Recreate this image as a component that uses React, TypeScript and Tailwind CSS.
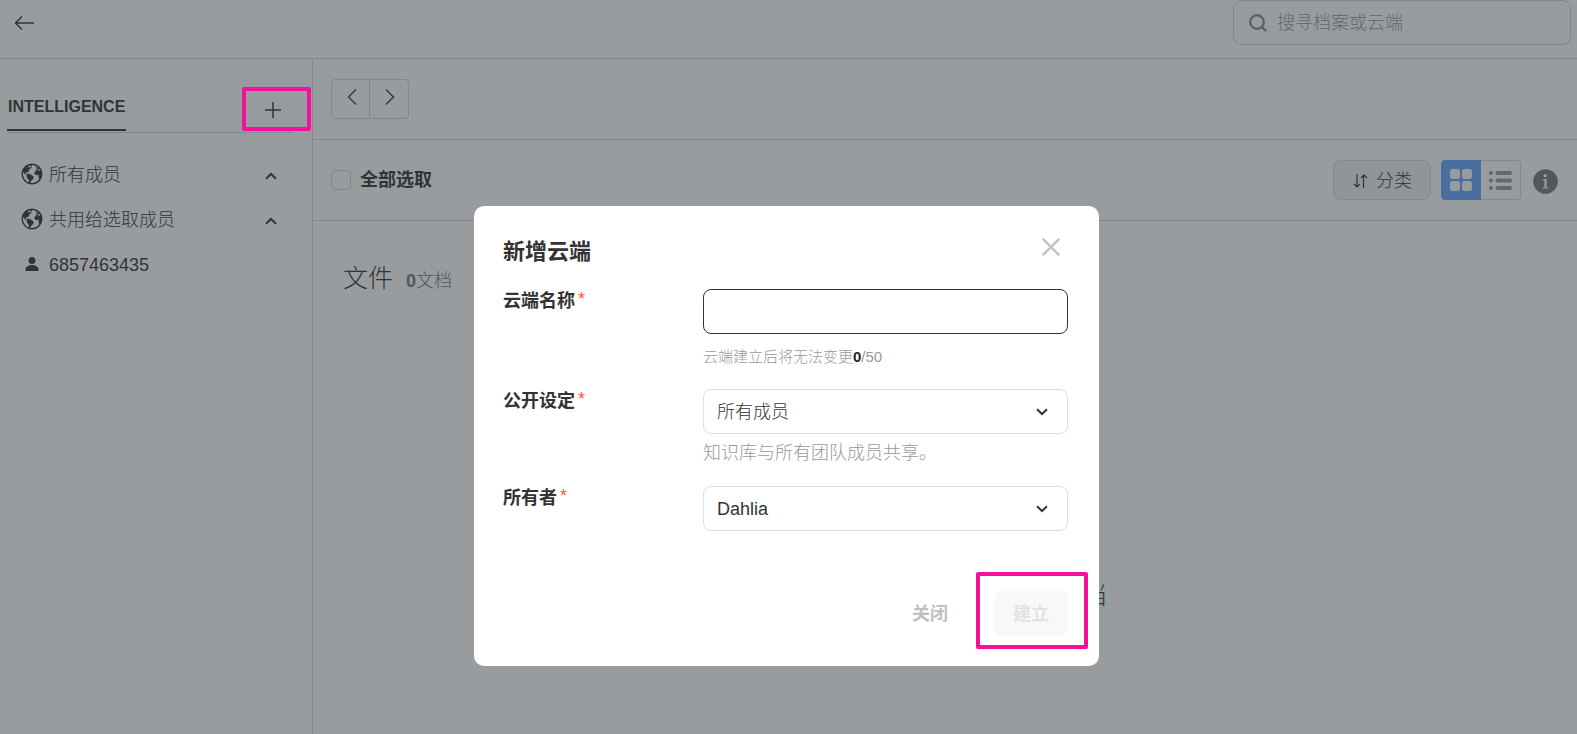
import { IoEarth, IoPersonSharp } from "react-icons/io5";

function Field({ id, label, children }: { id: string; label: string; children: React.ReactNode }) {
  return (
    <div className="flex">
      <label htmlFor={id} className="flex w-[200px] shrink-0 items-start text-lg leading-6 font-bold">
        {label}
        <span className="ml-[3px] leading-5 font-normal text-[#ff5c45]">*</span>
      </label>
      <div className="min-w-0 flex-1">{children}</div>
    </div>
  );
}

function Select({ id, options }: { id: string; options: string[] }) {
  return (
    <div className="relative">
      <select
        id={id}
        className="block h-[45px] w-full appearance-none rounded-lg border border-[#dddde5] bg-white px-[13px] text-lg font-light"
      >
        {options.map((option) => (
          <option key={option}>{option}</option>
        ))}
      </select>
      <svg className="pointer-events-none absolute top-[19px] right-5 h-2 w-3" viewBox="0 0 12 8" fill="none" stroke="#333" strokeWidth="2">
        <path d="M1 1.2 6 6l5-4.8" />
      </svg>
    </div>
  );
}

function SidebarItem({ icon, text, open }: { icon: React.ReactNode; text: string; open?: boolean }) {
  return (
    <li>
      <button type="button" className="flex h-[45px] w-full items-center pr-[35px] pl-5 text-left text-lg font-light">
        <span className="mr-[5px] flex w-6 justify-center">{icon}</span>
        <span className="flex-1">{text}</span>
        {open && (
          <svg className="mt-[3px] h-2 w-3" viewBox="0 0 12 8" fill="none" stroke="currentColor" strokeWidth="2">
            <path d="M1 6.8 6 2l5 4.8" />
          </svg>
        )}
      </button>
    </li>
  );
}

export default function App() {
  return (
    <div className="relative flex min-h-screen flex-col overflow-hidden bg-white font-['Liberation_Sans','Noto_Sans_CJK_SC',sans-serif] text-[#333]">
      <header className="flex h-[59px] items-start justify-between border-b border-[#d5d6df] pr-1.5 pl-[14px]">
        <button type="button" aria-label="返回" className="pt-4">
          <svg className="h-[15px] w-5" viewBox="0 0 20 15" fill="none" stroke="currentColor" strokeWidth="1.5">
            <path d="M20 7H2M8 .5 1.5 7 8 13.5" />
          </svg>
        </button>
        <div className="flex h-[45px] w-[338px] items-center rounded-lg border border-[#d5d6df] px-[15px]">
          <svg className="mr-[10px] h-[18px] w-[18px] shrink-0" viewBox="0 0 18 18" fill="none" stroke="#888" strokeWidth="2.2">
            <circle cx="8" cy="8" r="6.8" />
            <path d="m12.8 12.8 4.5 4.5" />
          </svg>
          <input
            type="search"
            aria-label="搜寻档案或云端"
            placeholder="搜寻档案或云端"
            className="min-w-0 flex-1 bg-transparent text-lg font-light placeholder:text-[#999]"
          />
        </div>
      </header>

      <div className="flex flex-1">
        <aside className="w-[313px] shrink-0 border-r border-[#d5d6df]">
          <div className="mr-[19px] ml-[7px] flex h-[74px] items-end justify-between border-b border-[#d5d6df]">
            <button type="button" className="mb-px h-9 border-b-2 border-[#333] px-px pb-2.5 text-base leading-6 font-bold">
              INTELLIGENCE
            </button>
            <button type="button" aria-label="新增" className="mr-3 mb-[14px]">
              <svg className="h-4 w-4" viewBox="0 0 16 16" stroke="currentColor" strokeWidth="1.5">
                <path d="M8 0v16M0 8h16" />
              </svg>
            </button>
          </div>
          <ul className="pt-[19px]">
            <SidebarItem icon={<IoEarth className="mb-0.5 h-6 w-6" />} text="所有成员" open />
            <SidebarItem icon={<IoEarth className="mb-0.5 h-6 w-6" />} text="共用给选取成员" open />
            <SidebarItem icon={<IoPersonSharp className="mb-0.5 h-4 w-4" />} text="6857463435" />
          </ul>
        </aside>

        <main className="min-w-0 flex-1">
          <div className="flex h-[81px] items-center border-b border-[#d5d6df] pl-[18px]">
            <div className="flex h-10 rounded-sm border border-[#d5d6df]">
              <button type="button" aria-label="上一页" className="w-[38px] border-r border-[#d5d6df] pb-1 pl-[15px]">
                <svg className="h-4 w-[10px]" viewBox="0 0 10 16" fill="none" stroke="currentColor" strokeWidth="1.3">
                  <path d="M9 .5 1.5 8 9 15.5" />
                </svg>
              </button>
              <button type="button" aria-label="下一页" className="w-[38px] pb-1 pl-[15px]">
                <svg className="h-4 w-[10px]" viewBox="0 0 10 16" fill="none" stroke="currentColor" strokeWidth="1.3">
                  <path d="M1 .5 8.5 8 1 15.5" />
                </svg>
              </button>
            </div>
          </div>

          <div className="flex h-[81px] items-center border-b border-[#d5d6df] pr-[19px] pl-[18px]">
            <label className="flex items-center gap-[9px] text-lg font-bold">
              <input type="checkbox" className="h-5 w-5 appearance-none rounded-sm border border-[#d5d6df]" />
              全部选取
            </label>
            <button type="button" className="ml-auto flex h-10 items-center gap-2 rounded-lg border border-[#d5d6df] bg-[#f0f2f7] px-[18px] pt-0.5 text-lg font-light">
              <svg className="h-4 w-4" viewBox="0 0 16 16" fill="none" stroke="currentColor" strokeWidth="1.2">
                <path d="M5 1v13M2 11l3 3 3-3M11.5 15V2M9 5l3-3 3 3" />
              </svg>
              分类
            </button>
            <div className="ml-[10px] flex h-10">
              <button type="button" aria-label="网格" className="flex w-10 items-center justify-center rounded-l-sm bg-[#65a6ff]">
                <svg className="h-[22px] w-[22px]" viewBox="0 0 22 22" fill="#fff">
                  <rect width="10" height="10" rx="2.5" />
                  <rect x="12" width="10" height="10" rx="2.5" />
                  <rect y="12" width="10" height="10" rx="2.5" />
                  <rect x="12" y="12" width="10" height="10" rx="2.5" />
                </svg>
              </button>
              <button type="button" aria-label="列表" className="flex w-10 items-center justify-center rounded-r-sm border border-l-0 border-[#d5d6df]">
                <svg className="h-[19px] w-[23px]" viewBox="0 0 23 19" fill="#999">
                  <circle cx="2" cy="2" r="2" />
                  <circle cx="2" cy="9.5" r="2" />
                  <circle cx="2" cy="17" r="2" />
                  <rect x="6.5" width="16.5" height="4" rx="2" />
                  <rect x="6.5" y="7.5" width="16.5" height="4" rx="2" />
                  <rect x="6.5" y="15" width="16.5" height="4" rx="2" />
                </svg>
              </button>
            </div>
            <button type="button" aria-label="信息" className="mt-[3px] ml-3">
              <svg className="h-[25px] w-[25px]" viewBox="0 0 25 25">
                <circle cx="12.5" cy="12.5" r="12.3" fill="#777" />
                <circle cx="12.2" cy="6.6" r="1.7" fill="#fff" />
                <path d="M9.6 9.9h4v8.5h1.8v1.2H9.5v-1.2h1.9v-7.3H9.6z" fill="#fff" />
              </svg>
            </button>
          </div>

          <div className="flex items-baseline gap-[13px] pt-[39px] pl-[30px]">
            <h1 className="text-[25px] leading-9 font-light">文件</h1>
            <p className="text-lg font-light text-[#777]">
              <span className="font-bold">0</span>文档
            </p>
          </div>
          <p className="mx-auto mt-[281px] w-[323px] text-right text-[25px] leading-9 font-light">文档</p>
        </main>
      </div>

      <div className="absolute inset-0 flex items-start justify-center bg-[rgba(47,55,59,0.495)] pt-[206px] pr-1">
        <div role="dialog" aria-labelledby="dialog-title" className="w-[625px] rounded-[10px] bg-white pt-8 pr-[31px] pb-[30px] pl-[29px]">
          <div className="mb-[23px] flex items-start justify-between">
            <h2 id="dialog-title" className="text-[22px] leading-7 font-bold">新增云端</h2>
            <button type="button" aria-label="取消" className="mr-2">
              <svg className="h-[18px] w-[18px]" viewBox="0 0 18 18" stroke="#c2c2c2" strokeWidth="2.4">
                <path d="m.8.8 16.4 16.4M17.2.8.8 17.2" />
              </svg>
            </button>
          </div>
          <form className="flex flex-col">
            <Field id="cloud-name" label="云端名称">
              <input id="cloud-name" type="text" className="block h-[45px] w-full rounded-lg border border-[#333] px-[13px] text-lg outline-none" />
              <p className="mt-[13px] mb-[22px] text-[15px] leading-5 font-light text-[#999]">
                云端建立后将无法变更<span className="font-bold text-[#222]">0</span>/50
              </p>
            </Field>
            <Field id="visibility" label="公开设定">
              <Select id="visibility" options={["所有成员"]} />
              <p className="mt-[7px] mb-[21px] text-lg leading-6 font-light text-[#999]">知识库与所有团队成员共享。</p>
            </Field>
            <Field id="owner" label="所有者">
              <Select id="owner" options={["Dahlia"]} />
            </Field>
            <div className="mt-[60px] flex justify-end gap-[26px]">
              <button type="button" className="h-[45px] px-5 text-lg font-bold text-[#c0c0c0]">关闭</button>
              <button type="submit" disabled className="h-[45px] w-[74px] rounded-lg bg-[#f7f8fa] text-lg font-bold text-[#e3e3e3]">建立</button>
            </div>
          </form>
        </div>
      </div>

      <div className="pointer-events-none absolute top-[87px] left-[242px] h-11 w-[69px] rounded-xs border-4 border-[#f5109a]" />
      <div className="pointer-events-none absolute top-[572px] left-[976px] h-[77px] w-28 rounded-xs border-4 border-[#f5109a]" />
    </div>
  );
}
